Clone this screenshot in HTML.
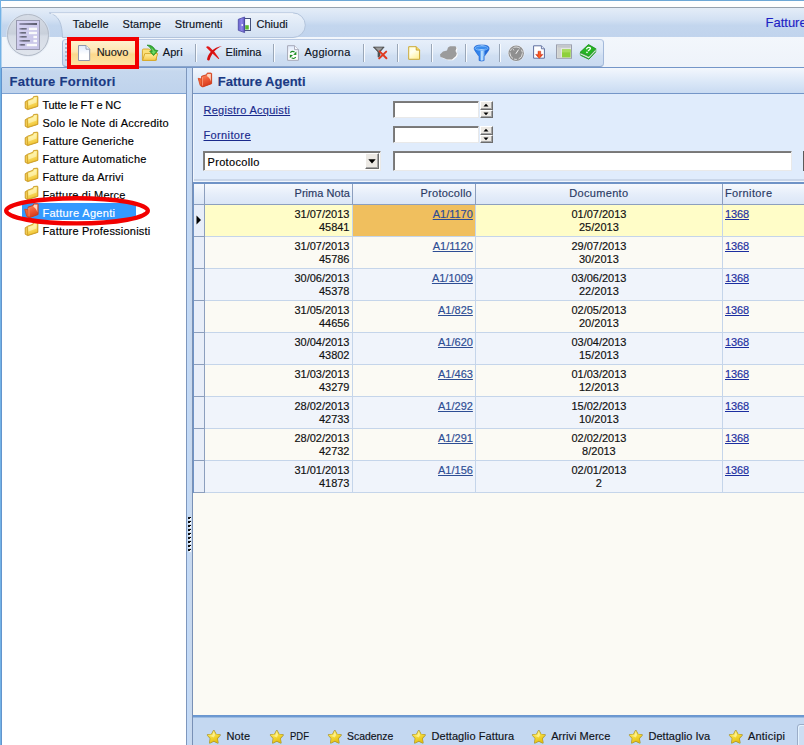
<!DOCTYPE html>
<html>
<head>
<meta charset="utf-8">
<title>Fatture Fornitori</title>
<style>
*{margin:0;padding:0;box-sizing:border-box}
html,body{width:804px;height:745px;overflow:hidden;background:#fff}
body{position:relative;font-family:"Liberation Sans",sans-serif;font-size:12px;color:#000}
.a{position:absolute}
.t{position:absolute;white-space:nowrap;line-height:1;-webkit-text-stroke:0.16px currentColor}
.u{text-decoration:underline}
svg{position:absolute;overflow:visible}
/* window chrome */
#topline{left:0;top:0;width:804px;height:1px;background:#6ea8d6}
#lb0{left:0;top:0;width:1px;height:745px;background:#72b2e6}
#lb1{left:1px;top:7px;width:1px;height:738px;background:linear-gradient(#b4d4f0 0,#b4d4f0 60px,#6394cc 61px,#6394cc 100%)}
#capline{left:2px;top:7px;width:802px;height:1px;background:#97a2ae}
#ribbon{left:2px;top:8px;width:802px;height:29px;background:linear-gradient(#e4edf8 0,#d3e1f3 40%,#c3d6ee 60%,#c1d4ed 100%)}
#tbband{left:2px;top:37px;width:802px;height:30px;background:linear-gradient(#f3f7fc,#eef3fa)}
#pill{left:50px;top:13px;width:256px;height:25px;border:1px solid #b3c5de;border-left:none;border-radius:0 13px 13px 0;background:linear-gradient(#e9f0fa 0,#dde8f6 45%,#d0def1 55%,#d6e3f4 100%)}
#toolbar{left:62px;top:39px;width:542px;height:28px;border:1px solid;border-color:#b7c9e4 #a3b9da #8ba5cb #a3b9da;border-radius:4px;background:linear-gradient(#e7effa 0,#dbe7f6 45%,#d0dff2 60%,#c9daf0 100%)}
.sep{position:absolute;top:44px;width:2px;height:18px;border-left:1px solid #9aa7b8;border-right:1px solid #f8fbff}
#line67{left:2px;top:67px;width:802px;height:1px;background:#7496c8}
/* left panel */
#lhead{left:2px;top:68px;width:184px;height:26px;background:linear-gradient(#d2e0f2 0,#c6d8ee 12%,#bfd3ec 100%);border-bottom:1px solid #7fa3d2}
#lbody{left:2px;top:94px;width:184px;height:651px;background:#fff}
#lright{left:186px;top:68px;width:1px;height:677px;background:#7e97bd}
#split{left:187px;top:68px;width:5px;height:677px;background:linear-gradient(to right,#c2dbfa,#c9d8ec)}
#rleft{left:192px;top:68px;width:1px;height:677px;background:#7890b6}
/* right panel */
#rhead{left:193px;top:68px;width:611px;height:26px;background:linear-gradient(#f3f7fd 0,#dde9f8 50%,#c9dbf2 100%);border-bottom:1px solid #7496c8}
#rform{left:193px;top:94px;width:611px;height:88px;background:#e0ecfc}
#gridbg{left:193px;top:182px;width:611px;height:534px;background:#fbfaf4}
#gridtop{left:193px;top:182px;width:611px;height:2px;background:#6f93c6}
#gridleft{left:193px;top:182px;width:1px;height:311px;background:#6f93c6}
#ghead{left:194px;top:184px;width:610px;height:20px;background:linear-gradient(#f6f9fd 0,#e6eefa 50%,#dbe6f6 100%)}
#gheadb{left:194px;top:204px;width:610px;height:1px;background:#8c9fbe}
.row{position:absolute;left:205px;width:599px;height:31px}
.rh{position:absolute;left:194px;width:10px;height:31px;background:#e8eef9}
.hl{position:absolute;left:194px;width:610px;height:1px;background:#c5d5ea}
.vl{position:absolute;top:183px;width:1px;height:310px;background:#c5d5ea}
#tabline{left:193px;top:715px;width:611px;height:3px;background:linear-gradient(#6a96cf 0,#6f9bd2 66%,#9bbbe2 67%,#9bbbe2 100%)}
#tabs{left:193px;top:718px;width:611px;height:28px;background:#c4d8f1}
.inp{position:absolute;background:#fff;border:1px solid;border-color:#7d7d7d #e9e9e9 #e9e9e9 #7d7d7d;box-shadow:inset 1px 1px 0 #777}
.btn{position:absolute;background:#ece9e4;border:1px solid;border-color:#fff #6d6d6d #6d6d6d #fff;box-shadow:inset -1px -1px 0 #a5a5a5}
</style>
</head>
<body>
<!--CHROME-->
<div class="a" id="topline"></div>
<div class="a" id="capline"></div>
<div class="a" id="ribbon"></div>
<div class="a" id="tbband"></div>
<div class="a" id="toolbar"></div>
<div class="a" id="line67"></div>
<div class="a" id="lhead"></div>
<div class="a" id="lbody"></div>
<div class="a" id="lright"></div>
<div class="a" id="split"></div>
<div class="a" id="rleft"></div>
<div class="a" id="rhead"></div>
<div class="a" id="rform"></div>
<div class="a" id="gridbg"></div>
<div class="a" id="ghead"></div>
<div class="row" style="top:205px;background:#fffdc8"></div>
<div class="rh" style="top:205px"></div>
<div class="hl" style="top:236px"></div>
<div class="row" style="top:237px;background:#fbfaf4"></div>
<div class="rh" style="top:237px"></div>
<div class="hl" style="top:268px"></div>
<div class="row" style="top:269px;background:#f0f4fb"></div>
<div class="rh" style="top:269px"></div>
<div class="hl" style="top:300px"></div>
<div class="row" style="top:301px;background:#fbfaf4"></div>
<div class="rh" style="top:301px"></div>
<div class="hl" style="top:332px"></div>
<div class="row" style="top:333px;background:#f0f4fb"></div>
<div class="rh" style="top:333px"></div>
<div class="hl" style="top:364px"></div>
<div class="row" style="top:365px;background:#fbfaf4"></div>
<div class="rh" style="top:365px"></div>
<div class="hl" style="top:396px"></div>
<div class="row" style="top:397px;background:#f0f4fb"></div>
<div class="rh" style="top:397px"></div>
<div class="hl" style="top:428px"></div>
<div class="row" style="top:429px;background:#fbfaf4"></div>
<div class="rh" style="top:429px"></div>
<div class="hl" style="top:460px"></div>
<div class="row" style="top:461px;background:#f0f4fb"></div>
<div class="rh" style="top:461px"></div>
<div class="hl" style="top:492px"></div>
<div class="a" style="left:353px;top:205px;width:122px;height:31px;background:#f0bf5e"></div>
<div class="vl" style="left:204px;background:#8c9fbe"></div>
<div class="vl" style="left:352px"></div>
<div class="a" style="left:352px;top:183px;width:1px;height:21px;background:#8c9fbe"></div>
<div class="vl" style="left:475px"></div>
<div class="a" style="left:475px;top:183px;width:1px;height:21px;background:#8c9fbe"></div>
<div class="vl" style="left:722px"></div>
<div class="a" style="left:722px;top:183px;width:1px;height:21px;background:#8c9fbe"></div>
<div class="a" style="left:194px;top:236px;width:11px;height:1px;background:#8c9fbe"></div>
<div class="a" style="left:194px;top:268px;width:11px;height:1px;background:#8c9fbe"></div>
<div class="a" style="left:194px;top:300px;width:11px;height:1px;background:#8c9fbe"></div>
<div class="a" style="left:194px;top:332px;width:11px;height:1px;background:#8c9fbe"></div>
<div class="a" style="left:194px;top:364px;width:11px;height:1px;background:#8c9fbe"></div>
<div class="a" style="left:194px;top:396px;width:11px;height:1px;background:#8c9fbe"></div>
<div class="a" style="left:194px;top:428px;width:11px;height:1px;background:#8c9fbe"></div>
<div class="a" style="left:194px;top:460px;width:11px;height:1px;background:#8c9fbe"></div>
<div class="a" style="left:194px;top:492px;width:11px;height:1px;background:#8c9fbe"></div>
<svg style="left:196px;top:215px" width="6" height="10"><path d="M0.5 0.5 L5 5 L0.5 9.5 Z" fill="#000"/></svg>
<div class="a" id="gridtop"></div>
<div class="a" id="gridleft"></div>
<div class="a" id="gheadb"></div>
<div class="a" id="tabline"></div>
<div class="a" id="tabs"></div>
<div class="a" id="lb0"></div>
<div class="a" id="lb1"></div>
<!-- toolbar separators -->
<div class="sep" style="left:195px"></div>
<div class="sep" style="left:273px"></div>
<div class="sep" style="left:363px"></div>
<div class="sep" style="left:397px"></div>
<div class="sep" style="left:431px"></div>
<div class="sep" style="left:465px"></div>
<div class="sep" style="left:499px"></div>
<!-- toolbar gripper -->
<div class="a" style="left:65px;top:43px;width:2px;height:20px;background:repeating-linear-gradient(#a9b9d2 0,#a9b9d2 2px,transparent 2px,transparent 4px)"></div>
<!-- Nuovo hot button -->
<div class="a" style="left:71px;top:41px;width:64px;height:24px;background:linear-gradient(#fff1cf 0,#fee5ae 45%,#fcd88c 55%,#fde3a4 100%)"></div>
<!-- form inputs -->
<div class="inp" style="left:393px;top:101px;width:86px;height:17px"></div>
<div class="inp" style="left:393px;top:126px;width:86px;height:17px"></div>
<div class="inp" style="left:393px;top:151px;width:399px;height:20px"></div>
<div class="inp" style="left:203px;top:151px;width:178px;height:20px"></div>
<div class="a" style="left:803px;top:151px;width:1px;height:20px;background:#5a5a5a"></div>
<div class="a" style="left:194px;top:179px;width:610px;height:2px;background:#c9d6e9"></div>
<div class="a" style="left:194px;top:181px;width:610px;height:1px;background:#f1f6fd"></div>
<div class="a" style="left:193px;top:94px;width:1px;height:88px;background:#f1f6fd"></div>
<!-- spinners -->
<div class="btn" style="left:479.5px;top:101px;width:13px;height:9px"></div>
<div class="btn" style="left:479.5px;top:110px;width:13px;height:8px"></div>
<div class="btn" style="left:479.5px;top:126px;width:13px;height:9px"></div>
<div class="btn" style="left:479.5px;top:135px;width:13px;height:8px"></div>
<svg style="left:483px;top:103px" width="6" height="13"><path d="M0.5 3.5h5L3 0.8z M0.5 9.5h5L3 12.2z" fill="#000"/></svg>
<svg style="left:483px;top:128px" width="6" height="13"><path d="M0.5 3.5h5L3 0.8z M0.5 9.5h5L3 12.2z" fill="#000"/></svg>
<!-- combo button -->
<div class="btn" style="left:365px;top:153px;width:14px;height:16px"></div>
<svg style="left:368px;top:159px" width="8" height="5"><path d="M0.3 0.3h7.4L4 4.4z" fill="#000"/></svg>
<!-- splitter grip -->
<div class="a" style="left:188px;top:517px;width:3px;height:36px;background:repeating-linear-gradient(#000 0,#000 2px,transparent 2px,transparent 4px)"></div>
<div class="a" style="left:189px;top:518px;width:2px;height:36px;background:repeating-linear-gradient(#fff 0,#fff 2px,transparent 2px,transparent 4px)"></div>
<div class="a" style="left:188px;top:517px;width:2px;height:36px;background:repeating-linear-gradient(#111 0,#111 2px,transparent 2px,transparent 4px)"></div>
<!-- tree selection -->
<div class="a" style="left:21.5px;top:202.5px;width:114px;height:17px;background:#3399ff;border-radius:1px"></div>
<!-- bottom-right tab scroll stub -->
<div class="a" style="left:797px;top:724px;width:12px;height:24px;border:1px solid #9badc8;border-radius:3px 0 0 0;background:#cddef3;box-shadow:inset 1px 1px 0 #e4f3ff"></div>
<!-- application button -->
<svg style="left:0;top:0" width="320" height="45" viewBox="0 0 320 45"><defs><linearGradient id="gPill" x1="0" y1="0" x2="0" y2="1"><stop offset="0" stop-color="#ecf2fa"/><stop offset="0.5" stop-color="#dde8f6"/><stop offset="1" stop-color="#d2e0f2"/></linearGradient></defs>
<path d="M49.3 12.9 L293 12.9 A12.3 12.3 0 0 1 293 37.5 L62.5 37.5 Q62.3 27 59.5 21 Q56 14.5 49.3 12.9 Z" fill="url(#gPill)" stroke="#aebfd8" stroke-width="0.9"/>
<path d="M51 13.8 L293 13.8" stroke="#f6f9fd" stroke-width="0.9" fill="none"/></svg>
<div class="a" style="left:6px;top:13px;width:44px;height:44px;border-radius:50%;background:#dde6f2;opacity:.6"></div>
<div class="a" style="left:7.3px;top:14.3px;width:41.6px;height:41.6px;border-radius:50%;border:1px solid #b0b8c5;background:linear-gradient(#d6dce6 0,#c9d0db 47%,#d6dce6 53%,#e0e5ed 100%)"></div>

<svg style="left:0;top:0" width="804" height="745" viewBox="0 0 804 745">
<defs>
<linearGradient id="gFold" x1="0" y1="0" x2="0.3" y2="1"><stop offset="0" stop-color="#fff6b0"/><stop offset="0.5" stop-color="#fbe26a"/><stop offset="1" stop-color="#efc232"/></linearGradient>
<linearGradient id="gFoldR" x1="0" y1="0" x2="0.3" y2="1"><stop offset="0" stop-color="#ff9a70"/><stop offset="0.5" stop-color="#f0603a"/><stop offset="1" stop-color="#d83a1c"/></linearGradient>
<linearGradient id="gStar" x1="0" y1="0" x2="0.4" y2="1"><stop offset="0" stop-color="#fff58c"/><stop offset="0.5" stop-color="#f6dc3c"/><stop offset="1" stop-color="#e6c214"/></linearGradient>
<linearGradient id="gPage" x1="0" y1="0" x2="0" y2="1"><stop offset="0" stop-color="#dfe9fb"/><stop offset="0.6" stop-color="#ffffff"/><stop offset="1" stop-color="#ffffff"/></linearGradient>
<linearGradient id="gYPage" x1="0" y1="0" x2="0.6" y2="1"><stop offset="0" stop-color="#fffdd0"/><stop offset="0.45" stop-color="#fffff0"/><stop offset="1" stop-color="#fff2a0"/></linearGradient>
<linearGradient id="gOpen" x1="0" y1="0" x2="0" y2="1"><stop offset="0" stop-color="#fff0a0"/><stop offset="1" stop-color="#f7c94e"/></linearGradient>
<linearGradient id="gFun" x1="0" y1="0" x2="1" y2="0"><stop offset="0" stop-color="#2a7ce8"/><stop offset="0.38" stop-color="#3586ec"/><stop offset="0.5" stop-color="#c4e4ff"/><stop offset="0.6" stop-color="#9ed0ff"/><stop offset="0.74" stop-color="#226cda"/><stop offset="1" stop-color="#1a62d0"/></linearGradient>
<linearGradient id="gDoor" x1="0" y1="0" x2="1" y2="0"><stop offset="0" stop-color="#6a66cc"/><stop offset="0.55" stop-color="#8f86ea"/><stop offset="1" stop-color="#5a55b8"/></linearGradient>
<linearGradient id="gApp" x1="0" y1="0" x2="1" y2="1"><stop offset="0" stop-color="#d9d5f8"/><stop offset="1" stop-color="#c2bee4"/></linearGradient>
<linearGradient id="gLine" x1="0" y1="0" x2="1" y2="0"><stop offset="0" stop-color="#8a86a8"/><stop offset="1" stop-color="#4a4a5c"/></linearGradient>
<linearGradient id="gLine2" x1="0" y1="0" x2="1" y2="0"><stop offset="0" stop-color="#8a86a8"/><stop offset="0.4" stop-color="#3c3c4c"/><stop offset="1" stop-color="#4a4a5a"/></linearGradient>
<g id="folder">
<path d="M0.3 5.9 L2.4 4.5 L7.9 2.5 L8.8 0.6 L12.4 0.3 Q12.9 0.3 12.9 0.9 L12.9 10.5 L2.7 13.7 L0.3 12.3 Z" fill="#e0ac2c" stroke="#c39320" stroke-width="0.8" stroke-linejoin="round"/>
<path d="M2.5 4.6 L7.9 2.6 L8.8 0.8 L12.3 0.5 Q12.7 0.5 12.7 1 L12.7 10.3 L2.8 13.4 Z" fill="url(#gFold)" stroke="#cfa128" stroke-width="0.7" stroke-linejoin="round"/>
<path d="M3.5 5.4 L8.6 3.5 L9.5 1.7 L11.6 1.5 L11.6 6.5 L3.6 9.5 Z" fill="#fffbd6" opacity="0.55"/>
<path d="M0.9 6.2 L1.9 5.5 L2.1 12.6 L0.9 11.9 Z" fill="#f2cf58"/>
</g>
<g id="folderR">
<path d="M3.6 3.5 L8.6 1.9 L9.2 0.3 L13.2 0.3 L13.6 0.7 L13.6 10.9 L4.8 14.1 L3.4 13.3 Z" fill="url(#gFoldR)" stroke="#cc3a16" stroke-width="0.9" stroke-linejoin="round"/>
<path d="M9.6 1.2 L12.8 1.2 L12.8 9 Q12 4.6 8.8 3.2 Z" fill="#ffe0cc" opacity="0.9"/>
<path d="M0.2 5.5 L3.8 6.3 L3.6 13.6 L2.2 12.7 Z" fill="#f26432" stroke="#d4401a" stroke-width="0.8" stroke-linejoin="round"/>
<path d="M4.3 4.3 L4.5 12.8" stroke="#ffb090" stroke-width="0.8" fill="none" opacity="0.9"/>
</g>
<g id="star">
<path d="M6.9 0.9 L8.9 4.6 L13.1 5.3 L10.2 8.5 L10.9 13 L6.9 11 L2.9 13 L3.6 8.5 L0.7 5.3 L4.9 4.6 Z" fill="url(#gStar)" stroke="#9c882c" stroke-width="1.5" stroke-linejoin="round"/>
<path d="M6.9 0.9 L8.9 4.6 L13.1 5.3 L10.2 8.5 L10.9 13 L6.9 11 L2.9 13 L3.6 8.5 L0.7 5.3 L4.9 4.6 Z" fill="url(#gStar)" stroke="url(#gStar)" stroke-width="0.5" stroke-linejoin="round"/>
<path d="M6.9 2.2 L8.2 5.2 L6.9 7.6 L3 6 L5.5 5.4 Z" fill="#fffbc0" opacity="0.6"/>
</g>
</defs>

<!-- application icon -->
<g opacity="0.88">
<rect x="16.5" y="20.5" width="23" height="29" fill="url(#gApp)" stroke="#9090a8"/>
<rect x="19.4" y="23" width="17.6" height="2" fill="url(#gLine)"/>
<g fill="url(#gLine2)"><rect x="19.3" y="28.2" width="7.4" height="1.3"/><rect x="19.3" y="32.2" width="6.7" height="1.3"/><rect x="19.3" y="36.2" width="7.4" height="1.3"/><rect x="19.3" y="40.2" width="10.6" height="1.3"/><rect x="19.3" y="44.2" width="5.6" height="1.3"/></g>
<g fill="#fff"><rect x="29" y="27.7" width="8" height="2.4"/><rect x="29" y="31.8" width="8" height="2.4"/><rect x="33.4" y="35.8" width="3.6" height="2.4"/><rect x="33.4" y="39.8" width="3.6" height="2.4"/><rect x="26.7" y="43.8" width="10.3" height="2.4"/></g>
</g>

<!-- door (Chiudi) -->
<rect x="244.5" y="18.5" width="6" height="12" fill="#f4fbff" stroke="#46527c"/>
<rect x="245.2" y="25.2" width="3.6" height="4.3" fill="#5cb82e"/>
<path d="M238.3 19.3 L244.6 17 L244.6 32.6 L238.3 30.3 Z" fill="url(#gDoor)" stroke="#4a48a4" stroke-width="0.8"/>
<rect x="241.6" y="24" width="1.2" height="2" fill="#fff"/>

<!-- Nuovo page -->
<path d="M78.5 45.5 L86 45.5 L89.7 49.2 L89.7 60.5 L78.5 60.5 Z" fill="url(#gPage)" stroke="#8f98ad"/>
<path d="M86 45.5 L86 49.2 L89.7 49.2" fill="#eef3fb" stroke="#8f98ad" stroke-width="0.9"/>

<!-- Apri -->
<path d="M142.4 60.2 L142.4 50.2 Q142.4 49 143.6 49 L148.4 49 Q149.3 49 149.9 49.8 L150.9 51 L155.4 51 Q156.4 51 156.4 52 L156.4 60.2 Z" fill="#fbe07a" stroke="#d4a424" stroke-width="0.9"/>
<path d="M142.6 60.4 L144.8 53.6 L157.7 53.6 L155.6 60.4 Z" fill="url(#gOpen)" stroke="#d4a424" stroke-width="0.9" stroke-linejoin="round"/>
<path d="M147 45.1 Q152.6 44.8 155.2 50 L157.9 50.6 L153.6 55.6 L149.7 51.3 L151.8 50.9 Q150.8 47 147 45.1 Z" fill="#36ae34" stroke="#1f8a22" stroke-width="0.7" stroke-linejoin="round"/>
<path d="M150.6 47.2 Q153.4 48.6 154.4 51.2 L156 51.6 L153.6 54.2 L151.6 52 L152.9 51.7 Q152.4 49.2 150.6 47.2 Z" fill="#7fe070" opacity="0.85"/>

<!-- Elimina X -->
<path d="M206.1 47.2 Q207.2 45.6 209.2 46.8 L214.6 52 L219.2 58.4 Q218.9 59.2 218.2 58.8 L212.4 53.6 Z" fill="#e21616"/>
<path d="M221.9 46 Q215.8 48.6 212.6 53.4 Q210.2 57 209.6 60 Q208.2 61.2 207 59.6 Q207.6 54.8 211.6 51 Q215.6 47.2 221.9 46 Z" fill="#d41010"/>

<!-- Aggiorna -->
<path d="M287.6 45.7 L294.5 45.7 L298.4 49.6 L298.4 60.3 L287.6 60.3 Z" fill="url(#gPage)" stroke="#a6a8b8"/>
<path d="M294.5 45.7 L294.5 49.6 L298.4 49.6" fill="#f6f8fc" stroke="#a6a8b8" stroke-width="0.9"/>
<path d="M290.3 52.6 Q292.2 50.4 294.6 52" fill="none" stroke="#1b8c22" stroke-width="1.1"/>
<path d="M293.2 54.8 L296.4 51.6 L296.4 55 Z" fill="#1b8c22"/>
<path d="M295.8 57.2 Q294 59.4 291.6 57.8" fill="none" stroke="#1b8c22" stroke-width="1.1"/>
<path d="M293 55 L289.8 58.2 L289.8 54.8 Z" fill="#1b8c22"/>

<!-- filter remove -->
<path d="M373.3 47 L384.2 47 L380 52 L380 56 L378 57.2 L378 52 Z" fill="#5a5a5a" stroke="#3c3c3c" stroke-width="0.6"/>
<path d="M375 47.6 L382.6 47.6 L379 51.6 Z" fill="#9a9a9a"/>
<path d="M379.6 51.4 L386.4 58.2 M386.2 51.6 L379.2 58.4" stroke="#e03a20" stroke-width="2" stroke-linecap="round" fill="none"/>

<!-- yellow page -->
<path d="M408.7 46.7 L416.2 46.7 L419.6 50.1 L419.6 59.3 L408.7 59.3 Z" fill="url(#gYPage)" stroke="#c9a52c" stroke-width="0.95"/>
<path d="M416.2 46.7 L416.2 50.1 L419.6 50.1" fill="#f4d860" stroke="#c8a226" stroke-width="0.9"/>

<!-- gray blob -->
<path d="M441 55 L444 52.3 L448 51.3 L449 48.3 L451 47.1 L456.5 47.1 L457.5 48.8 L456.5 51.8 L457.8 54.3 L457 56.8 L453 60.3 L448 60.3 L444.5 58.8 L441.5 57.8 Z" fill="#fdfdfd"/>
<path d="M440 54.5 L443 51.5 L447 50.5 L448 47.5 L450 46.3 L455.5 46.3 L456.5 48 L455.5 51 L456.8 53.5 L456 56 L452 59.5 L447 59.5 L443.5 58 L440.5 57 Z" fill="#9b9b9b"/>

<!-- funnel -->
<path d="M474.2 48.3 Q474.2 45 481.6 45 Q489.1 45 489.1 48.3 Q489.1 49.6 488 51.2 L484.1 56.6 L484.1 60.5 Q481.6 61.5 479.1 60.5 L479.1 56.6 L475.3 51.2 Q474.2 49.6 474.2 48.3 Z" fill="url(#gFun)" stroke="#1c64d4" stroke-width="0.7" stroke-linejoin="round"/>
<ellipse cx="481.6" cy="48.2" rx="6.5" ry="2.2" fill="#3a8cee" stroke="#8ec6ff" stroke-width="0.7"/>
<path d="M476.4 48.6 Q481.6 51.2 486.8 48.6 Q481.6 49.6 476.4 48.6 Z" fill="#bfe0ff" opacity="0.8"/>

<!-- clock -->
<circle cx="516.2" cy="53.2" r="8.3" fill="#f2f4f8" opacity="0.8"/>
<circle cx="516.2" cy="53.2" r="7.7" fill="#8f8f8f"/>
<circle cx="516.2" cy="53.2" r="6.2" fill="none" stroke="#f4f4f4" stroke-width="0.8" stroke-dasharray="7 1.6 3 1.2"/>
<path d="M515.8 53.8 L518.6 49.6" stroke="#f6f6f6" stroke-width="1" fill="none"/>
<path d="M513.3 49.2 L513.9 50.4" stroke="#e8e8e8" stroke-width="0.9" fill="none"/>

<!-- page w/ red arrow -->
<linearGradient id="gArr" x1="0" y1="0" x2="1" y2="0"><stop offset="0" stop-color="#c81a0a"/><stop offset="0.5" stop-color="#ff6424"/><stop offset="1" stop-color="#c81a0a"/></linearGradient>
<path d="M533.6 45.8 L541.4 45.8 L544.4 48.8 L544.4 58.2 L533.6 58.2 Z" fill="#fff" stroke="#5f6e9e"/>
<path d="M541.4 45.8 L541.4 48.8 L544.4 48.8" fill="#dfe5f6" stroke="#5f6e9e" stroke-width="0.9"/>
<path d="M538 51.2 L540.7 51.2 L540.7 54.4 L543 54.4 L539.3 58.4 L535.6 54.4 L538 54.4 Z" fill="url(#gArr)" stroke="#c0200c" stroke-width="0.4"/>

<!-- green window -->
<rect x="556.5" y="44.9" width="15" height="13.4" fill="#e4e6e2" stroke="#9a9eac"/>
<rect x="557.4" y="45.8" width="13.2" height="2" fill="#c2c6cc"/>
<rect x="557.4" y="47.8" width="3.4" height="9.6" fill="#d0d2d0"/>
<rect x="562" y="49.4" width="8.6" height="8" fill="#8ed03a"/>
<rect x="562" y="49.4" width="8.6" height="3" fill="#a8dc5c"/>

<!-- green book -->
<path d="M580.1 52.3 L588.5 44.5 L595.9 48.8 L588.8 56.2 Z" fill="#27b524" stroke="#138a16" stroke-width="0.8" stroke-linejoin="round"/>
<path d="M580.2 52.9 L588.8 56.8 L595.9 49.4 L595.9 51.2 L588.8 58.6 L580.2 54.6 Z" fill="#f4faf2" stroke="#2c9a2a" stroke-width="0.6" stroke-linejoin="round"/>
<path d="M580.4 55.2 L588.8 59.2 L595.8 51.8" fill="none" stroke="#1c9a1e" stroke-width="1"/>
<path d="M586.4 49.2 Q587.6 46.8 589.8 47.6 Q591.4 48.6 589.2 50 L588 51" fill="none" stroke="#fff" stroke-width="1.3"/>
<circle cx="587" cy="52.4" r="0.8" fill="#fff"/>

<!-- tree folders -->
<use href="#folder" x="24.9" y="95.9"/>
<use href="#folder" x="24.9" y="113.9"/>
<use href="#folder" x="24.9" y="131.9"/>
<use href="#folder" x="24.9" y="149.9"/>
<use href="#folder" x="24.9" y="167.9"/>
<use href="#folder" x="24.9" y="185.9"/>
<use href="#folderR" x="24.5" y="203.6"/>
<use href="#folder" x="24.9" y="221.9"/>
<!-- header folder -->
<use href="#folderR" x="198" y="72.8"/>

<!-- stars -->
<use href="#star" x="206.9" y="729.8"/>
<use href="#star" x="269.9" y="729.8"/>
<use href="#star" x="327.9" y="729.8"/>
<use href="#star" x="411.9" y="729.8"/>
<use href="#star" x="531.9" y="729.8"/>
<use href="#star" x="628.9" y="729.8"/>
<use href="#star" x="728.9" y="729.8"/>
</svg>

<span class="t" style="top:18.69px;font-size:11px;color:#0e141e;letter-spacing:0.163px;left:72.8px;">Tabelle</span>
<span class="t" style="top:18.69px;font-size:11px;color:#0e141e;letter-spacing:0.096px;left:122.5px;">Stampe</span>
<span class="t" style="top:18.69px;font-size:11px;color:#0e141e;letter-spacing:0.069px;left:174.8px;">Strumenti</span>
<span class="t" style="top:18.69px;font-size:11px;color:#0e141e;letter-spacing:0.019px;left:256.5px;">Chiudi</span>
<span class="t" style="top:16.00px;font-size:13px;color:#1f1fc4;left:765.5px;">Fatture Fornitori</span>
<span class="t" style="top:46.59px;font-size:11px;color:#1a1a1a;letter-spacing:-0.019px;left:96.7px;">Nuovo</span>
<span class="t" style="top:46.59px;font-size:11px;color:#0e141e;letter-spacing:0.109px;left:162.7px;">Apri</span>
<span class="t" style="top:46.59px;font-size:11px;color:#0e141e;letter-spacing:-0.054px;left:225.6px;">Elimina</span>
<span class="t" style="top:46.59px;font-size:11px;color:#0e141e;letter-spacing:0.269px;left:304.4px;">Aggiorna</span>
<span class="t" style="top:74.90px;font-size:13px;color:#1b3a84;letter-spacing:0.299px;left:9.5px;font-weight:bold">Fatture Fornitori</span>
<span class="t" style="top:74.90px;font-size:13px;color:#1b3a84;letter-spacing:0.011px;left:217.8px;font-weight:bold">Fatture Agenti</span>
<span class="t" style="top:99.69px;font-size:11px;color:#000;letter-spacing:-0.131px;left:42.4px;">Tutte le FT e NC</span>
<span class="t" style="top:117.69px;font-size:11px;color:#000;letter-spacing:0.270px;left:42.4px;">Solo le Note di Accredito</span>
<span class="t" style="top:135.69px;font-size:11px;color:#000;letter-spacing:0.173px;left:42.4px;">Fatture Generiche</span>
<span class="t" style="top:153.69px;font-size:11px;color:#000;letter-spacing:0.313px;left:42.4px;">Fatture Automatiche</span>
<span class="t" style="top:171.69px;font-size:11px;color:#000;letter-spacing:0.209px;left:42.4px;">Fatture da Arrivi</span>
<span class="t" style="top:189.69px;font-size:11px;color:#000;letter-spacing:0.194px;left:42.4px;">Fatture di Merce</span>
<span class="t" style="top:207.69px;font-size:11px;color:#fff;letter-spacing:0.321px;left:42.4px;">Fatture Agenti</span>
<span class="t" style="top:225.69px;font-size:11px;color:#000;letter-spacing:0.217px;left:42.4px;">Fatture Professionisti</span>
<span class="t u" style="top:104.69px;font-size:11px;color:#1a2a8c;letter-spacing:0.280px;left:203.5px;">Registro Acquisti</span>
<span class="t u" style="top:129.69px;font-size:11px;color:#1a2a8c;letter-spacing:0.374px;left:203.5px;">Fornitore</span>
<span class="t" style="top:157.09px;font-size:11px;color:#000;letter-spacing:0.328px;left:207.5px;">Protocollo</span>
<span class="t" style="top:187.89px;font-size:11px;color:#2a3a64;letter-spacing:0.047px;left:294.5px;">Prima Nota</span>
<span class="t" style="top:187.89px;font-size:11px;color:#2a3a64;letter-spacing:0.258px;left:420.5px;">Protocollo</span>
<span class="t" style="top:187.89px;font-size:11px;color:#2a3a64;letter-spacing:0.337px;left:569.2px;">Documento</span>
<span class="t" style="top:187.89px;font-size:11px;color:#2a3a64;letter-spacing:0.374px;left:725.0px;">Fornitore</span>
<span class="t" style="top:208.69px;font-size:11px;color:#111;left:294.4px;">31/07/2013</span>
<span class="t" style="top:221.69px;font-size:11px;color:#111;left:318.9px;">45841</span>
<span class="t u" style="top:208.69px;font-size:11px;color:#2d4d94;left:432.7px;">A1/1170</span>
<span class="t" style="top:208.69px;font-size:11px;color:#111;left:571.4px;">01/07/2013</span>
<span class="t" style="top:221.69px;font-size:11px;color:#111;left:579.0px;">25/2013</span>
<span class="t u" style="top:208.69px;font-size:11px;color:#1c2ea0;letter-spacing:-0.121px;left:725.0px;">1368</span>
<span class="t" style="top:240.69px;font-size:11px;color:#111;left:294.4px;">31/07/2013</span>
<span class="t" style="top:253.69px;font-size:11px;color:#111;left:318.9px;">45786</span>
<span class="t u" style="top:240.69px;font-size:11px;color:#2d4d94;left:432.7px;">A1/1120</span>
<span class="t" style="top:240.69px;font-size:11px;color:#111;left:571.4px;">29/07/2013</span>
<span class="t" style="top:253.69px;font-size:11px;color:#111;left:579.0px;">30/2013</span>
<span class="t u" style="top:240.69px;font-size:11px;color:#1c2ea0;letter-spacing:-0.121px;left:725.0px;">1368</span>
<span class="t" style="top:272.69px;font-size:11px;color:#111;left:294.4px;">30/06/2013</span>
<span class="t" style="top:285.69px;font-size:11px;color:#111;left:318.9px;">45378</span>
<span class="t u" style="top:272.69px;font-size:11px;color:#2d4d94;left:431.9px;">A1/1009</span>
<span class="t" style="top:272.69px;font-size:11px;color:#111;left:571.4px;">03/06/2013</span>
<span class="t" style="top:285.69px;font-size:11px;color:#111;left:579.0px;">22/2013</span>
<span class="t u" style="top:272.69px;font-size:11px;color:#1c2ea0;letter-spacing:-0.121px;left:725.0px;">1368</span>
<span class="t" style="top:304.69px;font-size:11px;color:#111;left:294.4px;">31/05/2013</span>
<span class="t" style="top:317.69px;font-size:11px;color:#111;left:318.9px;">44656</span>
<span class="t u" style="top:304.69px;font-size:11px;color:#2d4d94;left:438.0px;">A1/825</span>
<span class="t" style="top:304.69px;font-size:11px;color:#111;left:571.4px;">02/05/2013</span>
<span class="t" style="top:317.69px;font-size:11px;color:#111;left:579.0px;">20/2013</span>
<span class="t u" style="top:304.69px;font-size:11px;color:#1c2ea0;letter-spacing:-0.121px;left:725.0px;">1368</span>
<span class="t" style="top:336.69px;font-size:11px;color:#111;left:294.4px;">30/04/2013</span>
<span class="t" style="top:349.69px;font-size:11px;color:#111;left:318.9px;">43802</span>
<span class="t u" style="top:336.69px;font-size:11px;color:#2d4d94;left:438.0px;">A1/620</span>
<span class="t" style="top:336.69px;font-size:11px;color:#111;left:571.4px;">03/04/2013</span>
<span class="t" style="top:349.69px;font-size:11px;color:#111;left:579.0px;">15/2013</span>
<span class="t u" style="top:336.69px;font-size:11px;color:#1c2ea0;letter-spacing:-0.121px;left:725.0px;">1368</span>
<span class="t" style="top:368.69px;font-size:11px;color:#111;left:294.4px;">31/03/2013</span>
<span class="t" style="top:381.69px;font-size:11px;color:#111;left:318.9px;">43279</span>
<span class="t u" style="top:368.69px;font-size:11px;color:#2d4d94;left:438.0px;">A1/463</span>
<span class="t" style="top:368.69px;font-size:11px;color:#111;left:571.4px;">01/03/2013</span>
<span class="t" style="top:381.69px;font-size:11px;color:#111;left:579.0px;">12/2013</span>
<span class="t u" style="top:368.69px;font-size:11px;color:#1c2ea0;letter-spacing:-0.121px;left:725.0px;">1368</span>
<span class="t" style="top:400.69px;font-size:11px;color:#111;left:294.4px;">28/02/2013</span>
<span class="t" style="top:413.69px;font-size:11px;color:#111;left:318.9px;">42733</span>
<span class="t u" style="top:400.69px;font-size:11px;color:#2d4d94;left:438.0px;">A1/292</span>
<span class="t" style="top:400.69px;font-size:11px;color:#111;left:571.4px;">15/02/2013</span>
<span class="t" style="top:413.69px;font-size:11px;color:#111;left:579.0px;">10/2013</span>
<span class="t u" style="top:400.69px;font-size:11px;color:#1c2ea0;letter-spacing:-0.121px;left:725.0px;">1368</span>
<span class="t" style="top:432.69px;font-size:11px;color:#111;left:294.4px;">28/02/2013</span>
<span class="t" style="top:445.69px;font-size:11px;color:#111;left:318.9px;">42732</span>
<span class="t u" style="top:432.69px;font-size:11px;color:#2d4d94;left:438.0px;">A1/291</span>
<span class="t" style="top:432.69px;font-size:11px;color:#111;left:571.4px;">02/02/2013</span>
<span class="t" style="top:445.69px;font-size:11px;color:#111;left:582.1px;">8/2013</span>
<span class="t u" style="top:432.69px;font-size:11px;color:#1c2ea0;letter-spacing:-0.121px;left:725.0px;">1368</span>
<span class="t" style="top:464.69px;font-size:11px;color:#111;left:294.4px;">31/01/2013</span>
<span class="t" style="top:477.69px;font-size:11px;color:#111;left:318.9px;">41873</span>
<span class="t u" style="top:464.69px;font-size:11px;color:#2d4d94;left:438.0px;">A1/156</span>
<span class="t" style="top:464.69px;font-size:11px;color:#111;left:571.4px;">02/01/2013</span>
<span class="t" style="top:477.69px;font-size:11px;color:#111;left:595.8px;">2</span>
<span class="t u" style="top:464.69px;font-size:11px;color:#1c2ea0;letter-spacing:-0.121px;left:725.0px;">1368</span>
<span class="t" style="top:731.09px;font-size:11px;color:#10131a;letter-spacing:0.163px;left:226.4px;">Note</span>
<span class="t" style="top:731.09px;font-size:11px;color:#10131a;left:289.5px;transform:scaleX(0.8591);transform-origin:0 0;">PDF</span>
<span class="t" style="top:731.09px;font-size:11px;color:#10131a;left:347.3px;transform:scaleX(0.9461);transform-origin:0 0;">Scadenze</span>
<span class="t" style="top:731.09px;font-size:11px;color:#10131a;letter-spacing:0.087px;left:431.4px;">Dettaglio Fattura</span>
<span class="t" style="top:731.09px;font-size:11px;color:#10131a;letter-spacing:0.036px;left:551.2px;">Arrivi Merce</span>
<span class="t" style="top:731.09px;font-size:11px;color:#10131a;letter-spacing:0.057px;left:648.4px;">Dettaglio Iva</span>
<span class="t" style="top:731.09px;font-size:11px;color:#10131a;letter-spacing:0.241px;left:747.9px;">Anticipi</span>
<div class="a" style="left:67px;top:37px;width:72px;height:32px;border:4px solid #f20000"></div>
<svg style="left:0;top:190px" width="160" height="42" viewBox="0 190 160 42"><ellipse cx="77" cy="210.8" rx="70.8" ry="12.6" fill="none" stroke="#f20000" stroke-width="4.4"/></svg>

</body>
</html>
